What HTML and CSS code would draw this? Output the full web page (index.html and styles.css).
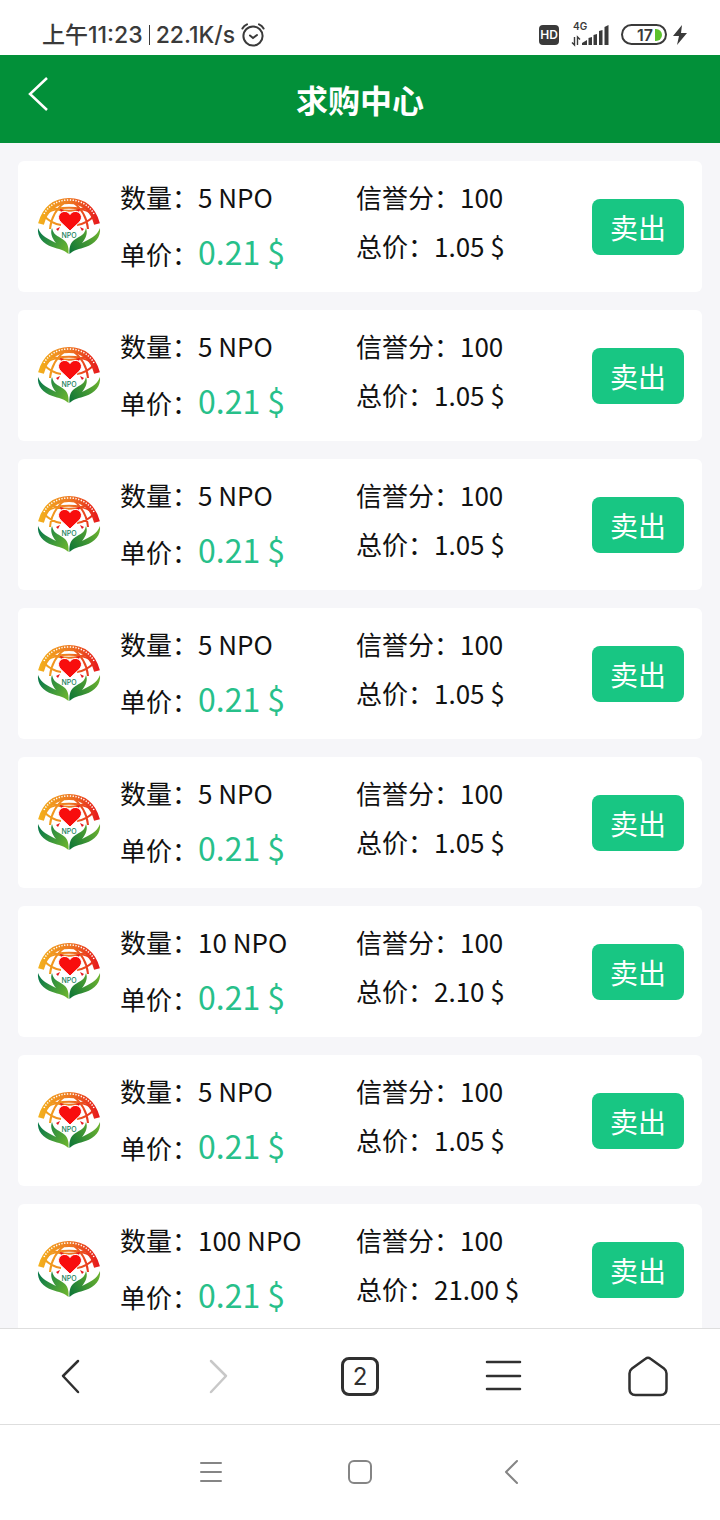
FILE: index.html
```html
<!DOCTYPE html>
<html lang="zh-CN">
<head>
    <meta charset="UTF-8">
    <meta name="viewport" content="width=device-width, initial-scale=1.0">
    <title>求购中心</title>
    <link rel="stylesheet" href="styles.css">
</head>
<body>
    <!-- Shared token logo -->
    <svg class="sprite" aria-hidden="true">
        <defs>
            <linearGradient id="sun" gradientUnits="userSpaceOnUse" x1="2" y1="30" x2="64" y2="30">
                <stop offset="0" stop-color="#f3b21c"/>
                <stop offset="0.5" stop-color="#ee7a22"/>
                <stop offset="1" stop-color="#e6141c"/>
            </linearGradient>
            <linearGradient id="leaf-left" gradientUnits="userSpaceOnUse" x1="4" y1="38" x2="33" y2="56">
                <stop offset="0" stop-color="#0b7a48"/>
                <stop offset="1" stop-color="#6db52f"/>
            </linearGradient>
            <linearGradient id="leaf-right" gradientUnits="userSpaceOnUse" x1="33" y1="58" x2="62" y2="38">
                <stop offset="0" stop-color="#0b7438"/>
                <stop offset="1" stop-color="#6ab02f"/>
            </linearGradient>
        </defs>
        <symbol id="logo" viewBox="0 0 66 66">
            <g fill="none" stroke="url(#sun)">
                <path stroke-width="6" d="M5 30C9 15 19 7 33 7s24 8 28 23"/>
                <path stroke-width="2" d="M8 22c6 6 10 8 17 9M58 22c-6 6-10 8-17 9M14 35c1-12 7-21 16-28M52 35c-1-12-7-21-16-28M15 13c11 5 25 5 36 0M11 19c11-7 33-7 44 0"/>
            </g>
            <path fill="none" stroke="#fff" stroke-width="1.5" stroke-dasharray="1.3 1.5" d="M8 20C13 11 22 6 33 6s20 5 25 14"/>
            <path fill="#e6141c" d="M20 35l4-2-2 4zM48 35l-4-2 2 4zM24 15l4 1-3 2zM44 15l-4 1 3 2z"/>
            <path fill="#f80d0d" stroke="#fff" stroke-width="1" d="M34 37L24.500 28c-4.500-5-.5-11 4.500-10.500 2.500 0 4 1.500 5 3 1-1.500 2.500-3 5-3 5-.5 9 5.500 4.500 10.500z"/>
            <path fill="url(#leaf-left)" d="M2 34c3 8 10 11 18 15-4-5-6-10-4-15 2 9 8 8 13 13 3 3 4 8 3.500 13-4-4-10-5-16-7C7 50 1 43 2 34z"/>
            <path fill="url(#leaf-right)" d="M64 34c-3 8-10 11-18 15 4-5 6-10 4-15-2 9-8 8-13 13-3 3-4 8-3.500 13 4-4 10-5 16-7C59 50 65 43 64 34z"/>
        </symbol>
    </svg>

    <div class="status-bar">
        <div class="status-left">
            <span>上午11:23</span>
            <span class="divider"></span>
            <span>22.1K/s</span>
            <svg class="alarm" viewBox="0 0 24 24" aria-hidden="true">
                <g fill="none" stroke="#3a3a3a" stroke-width="2" stroke-linecap="round">
                    <circle cx="12" cy="13" r="9.6"/>
                    <path d="M1.4 5.5Q3 2.5 6 1.4M22.6 5.5Q21 2.5 18 1.4M9 12.5l3 2.5 4-3"/>
                </g>
            </svg>
        </div>
        <div class="status-right">
            <span class="hd">HD</span>
            <div class="signal">
                <span class="network">4G</span>
                <svg viewBox="0 0 38 22" aria-hidden="true">
                    <path fill="none" stroke="#3a3a3a" stroke-width="1.4" d="M3.500 13v8l-2.500-2.500M6.500 21v-8l2.500 2.500"/>
                    <path fill="#3a3a3a" d="M11 21v-2l5-3v5zM17.500 21v-7l3.500-1v8zM22.500 21V11l3.500-1v11zM28 21V7l3.500-1v15zM33.500 21V3l4-2v20z"/>
                </svg>
            </div>
            <div class="battery">17<span class="charge"></span></div>
            <svg class="bolt" viewBox="0 0 14 20" aria-hidden="true">
                <path fill="#3a3a3a" d="M9 0L0 11h6L4 20 14 8H8z"/>
            </svg>
        </div>
    </div>

    <header class="header">
        <button class="back" aria-label="返回">
            <svg viewBox="0 0 24 36"><path d="M21 2L4 18l17 16"/></svg>
        </button>
        <h1>求购中心</h1>
    </header>

    <main class="list" id="list"></main>

    <nav class="browser-nav">
        <button aria-label="后退">
            <svg viewBox="0 0 44 44"><path d="M28 6L13 21l15 16"/></svg>
        </button>
        <button aria-label="前进" disabled>
            <svg viewBox="0 0 44 44"><path d="M17 6l15 15-15 16"/></svg>
        </button>
        <button aria-label="标签页">
            <span class="tabs">2</span>
        </button>
        <button aria-label="菜单">
            <svg viewBox="0 0 44 44"><path d="M5 7h33M5 21h33M5 34h33"/></svg>
        </button>
        <button aria-label="主页">
            <svg viewBox="0 0 44 44"><path d="M19.500 3.700q2.500-2 5 0L38 13.500q2.500 2 2.500 5V34q0 6-6 6h-25q-6 0-6-6V18.500q0-3 2.500-5z"/></svg>
        </button>
    </nav>

    <nav class="system-nav">
        <button aria-label="最近任务">
            <svg viewBox="0 0 24 24"><path d="M3 2h20M3 11h20M3 20h20"/></svg>
        </button>
        <button aria-label="桌面">
            <svg viewBox="0 0 24 24"><rect x="1" y="0" width="22" height="22" rx="5"/></svg>
        </button>
        <button aria-label="返回上一页">
            <svg viewBox="0 0 24 24"><path d="M19 0L8 11l11 11"/></svg>
        </button>
    </nav>

    <script>
        const orders = [
            { amount: 5, total: '1.05' },
            { amount: 5, total: '1.05' },
            { amount: 5, total: '1.05' },
            { amount: 5, total: '1.05' },
            { amount: 5, total: '1.05' },
            { amount: 10, total: '2.10' },
            { amount: 5, total: '1.05' },
            { amount: 100, total: '21.00' }
        ];

        document.getElementById('list').innerHTML = orders.map(order => `
            <article class="card">
                <svg class="logo" viewBox="0 0 66 66">
                    <use href="#logo"/>
                    <text class="logo-text" x="33" y="44" text-anchor="middle">NPO</text>
                </svg>
                <div class="info">
                    <p>数量：${order.amount} NPO</p>
                    <p>单价：<span class="price">0.21 $</span></p>
                </div>
                <div class="info">
                    <p>信誉分：100</p>
                    <p>总价：${order.total} $</p>
                </div>
                <button class="sell">卖出</button>
            </article>
        `).join('');
    </script>
</body>
</html>
```

FILE: styles.css
```css
* {
    box-sizing: border-box;
}

body {
    margin: 0;
    height: 100vh;
    display: flex;
    flex-direction: column;
    background: #f6f6f9;
    color: #111;
    font-family: "Noto Sans CJK SC", "Noto Sans", sans-serif;
}

button {
    padding: 0;
    border: none;
    background: none;
    font-family: inherit;
    cursor: pointer;
}

svg {
    display: block;
    overflow: visible;
}

.sprite {
    position: absolute;
    width: 0;
    height: 0;
}

/* Phone status bar */
.status-bar {
    flex: none;
    display: flex;
    justify-content: space-between;
    height: 55px;
    padding: 14px 33px 0 42px;
    background: #fff;
    color: #3a3a3a;
}

.status-left,
.status-right {
    display: flex;
    align-items: center;
}

.status-left {
    gap: 6px;
    font-family: Inter, "Noto Sans CJK SC", sans-serif;
    font-size: 23px;
    font-weight: 500;
    line-height: 28px;
}

.divider {
    width: 1px;
    height: 20px;
    background: #3a3a3a;
}

.alarm {
    width: 24px;
    height: 24px;
}

.status-right {
    font-family: Inter, sans-serif;
}

.hd {
    width: 20px;
    border-radius: 4px;
    background: #3a3a3a;
    color: #fff;
    font-size: 12px;
    font-weight: 600;
    line-height: 20px;
    text-align: center;
}

.signal {
    position: relative;
    width: 38px;
    margin: 0 12px;
}

.network {
    position: absolute;
    top: -3px;
    left: 2px;
    font-size: 10px;
    font-weight: 600;
    line-height: 10px;
}

.battery {
    display: flex;
    align-items: center;
    justify-content: flex-end;
    gap: 2px;
    width: 46px;
    height: 21px;
    padding-right: 3px;
    border: 2px solid #3a3a3a;
    border-radius: 11px;
    font-size: 16px;
    font-weight: 600;
}

.charge {
    width: 7px;
    height: 12px;
    border-radius: 0 6px 6px 0;
    background: #5cc22c;
}

.bolt {
    width: 14px;
    height: 20px;
    margin-left: 6px;
}

/* Page header */
.header {
    flex: none;
    display: grid;
    grid-template-columns: 1fr auto 1fr;
    align-items: center;
    height: 88px;
    padding: 0 26px;
    background: #029039;
    color: #fff;
}

.header h1 {
    margin: 0;
    font-size: 32px;
    font-weight: 700;
    line-height: 44px;
}

.back {
    align-self: start;
    justify-self: start;
    height: 78px;
}

.back svg {
    width: 24px;
    height: 36px;
    fill: none;
    stroke: #fff;
    stroke-width: 2.5;
}

/* Order list */
.list {
    flex: 1;
    min-height: 0;
    display: flex;
    flex-direction: column;
    gap: 18px;
    padding: 18px;
    overflow-y: auto;
    scrollbar-width: none;
}

.card {
    flex: none;
    display: flex;
    align-items: center;
    padding: 17px 18px 16px;
    border-radius: 6px;
    background: #fff;
}

.logo {
    width: 66px;
    height: 66px;
    margin-right: 18px;
}

.logo-text {
    fill: #16805a;
    font-family: Inter, sans-serif;
    font-size: 7px;
    font-weight: 500;
}

.info {
    flex: 1;
    align-self: flex-start;
    display: flex;
    flex-direction: column;
    gap: 11px;
    font-size: 26px;
    line-height: 38px;
    white-space: nowrap;
}

.info p {
    margin: 0;
}

.price {
    color: #27c08a;
    font-size: 32px;
    line-height: 49px;
}

.sell {
    width: 92px;
    height: 56px;
    border-radius: 8px;
    background: #18c683;
    color: #fff;
    font-size: 28px;
    line-height: 40px;
}

/* Bottom bars */
.browser-nav,
.system-nav {
    flex: none;
    display: flex;
    align-items: center;
    height: 96px;
    border-top: 1px solid #dedede;
    background: #fff;
}

.browser-nav button {
    flex: 1;
    display: flex;
    justify-content: center;
    color: #303030;
}

.browser-nav button:disabled {
    color: #c8c8c8;
}

.browser-nav svg {
    width: 44px;
    height: 44px;
    fill: none;
    stroke: currentColor;
    stroke-width: 2.5;
    stroke-linecap: round;
    stroke-linejoin: round;
}

.tabs {
    width: 38px;
    height: 39px;
    border: 3px solid #303030;
    border-radius: 8px;
    font-family: Inter, sans-serif;
    font-size: 24px;
    line-height: 34px;
}

.system-nav {
    justify-content: center;
    gap: 126px;
}

.system-nav svg {
    width: 24px;
    height: 24px;
    fill: none;
    stroke: #858585;
    stroke-width: 2;
    stroke-linecap: round;
    stroke-linejoin: round;
}
```
